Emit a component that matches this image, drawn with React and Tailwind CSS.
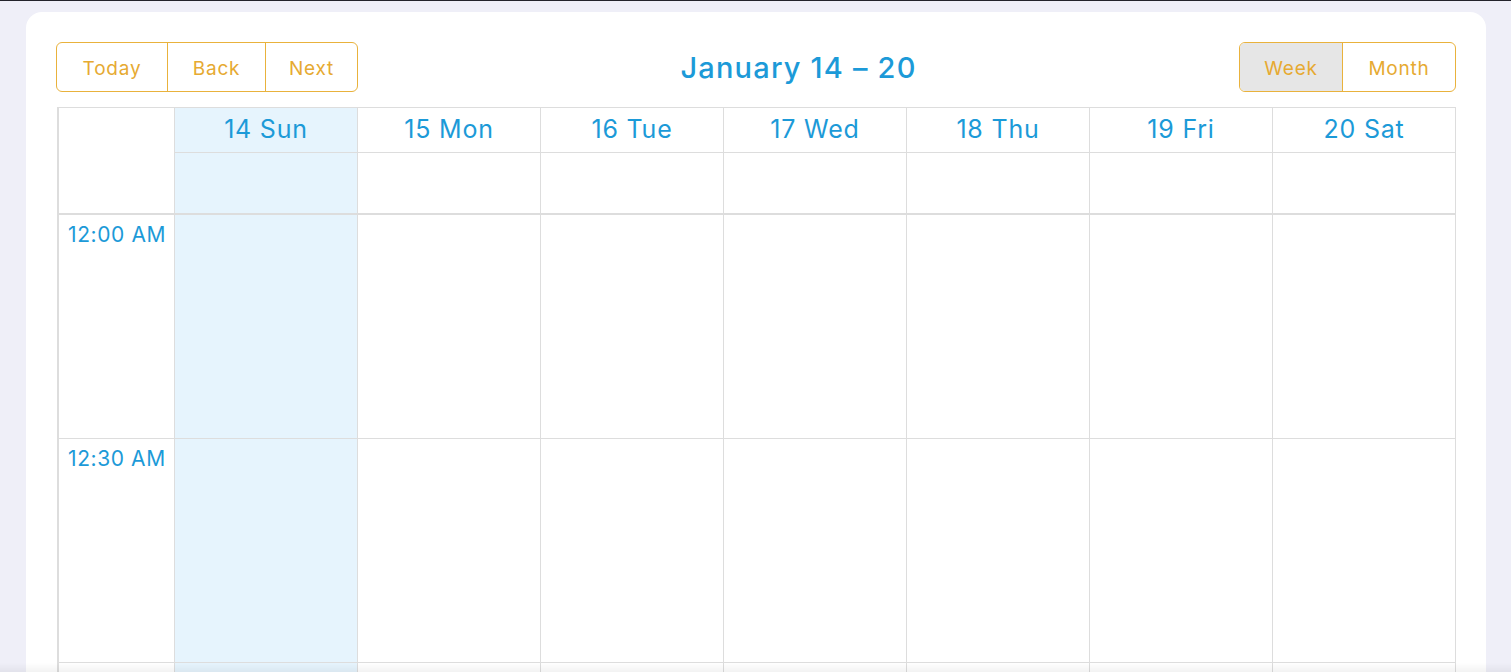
import React from "react";

const days = ["14 Sun", "15 Mon", "16 Tue", "17 Wed", "18 Thu", "19 Fri", "20 Sat"];
const times = ["12:00 AM", "12:30 AM", ""];

export default function App() {
  return (
    <div
      className="min-h-screen bg-[#efeff8] border-t border-[#23232b] px-[26px] pt-[11px] overflow-hidden"
      style={{ fontFamily: "Inter, 'Noto Sans', sans-serif" }}
    >
      <div className="bg-white rounded-2xl pl-[30px] pr-[30px] pt-[30px] pb-10 w-[1460px]">
        {/* toolbar */}
        <div className="flex items-center justify-between h-[50px]">
          <div className="flex h-[50px] border border-[#e9b23c] rounded-md text-[19px] tracking-[0.8px] text-[#e6aa32]">
            <button className="w-[111px] border-r border-[#e9b23c] pt-[4px]">Today</button>
            <button className="w-[98px] border-r border-[#e9b23c] pt-[4px]">Back</button>
            <button className="w-[91px] pt-[4px]">Next</button>
          </div>
          <div className="text-[29px] font-medium text-[#1c9ad8] tracking-[1.2px] pt-[2px]">January 14 – 20</div>
          <div className="flex h-[50px] border border-[#e9b23c] rounded-md text-[19px] tracking-[0.8px] text-[#e6aa32] overflow-hidden">
            <button className="w-[103px] border-r border-[#e9b23c] bg-[#e6e6e6] pt-[4px]">Week</button>
            <button className="w-[112px] pt-[4px]">Month</button>
          </div>
        </div>

        {/* grid */}
        <div className="mt-[15px] ml-px border border-[#dddddd] border-l-2 text-[#1c9ad8]">
          {/* header */}
          <div className="grid grid-cols-[115px_repeat(7,1fr)] border-b-2 border-[#dddddd]">
            <div />
            {days.map((d, i) => (
              <div key={d} className={`border-l border-[#dddddd] ${i === 0 ? "bg-[#e6f4fd]" : ""}`}>
                <div className="h-[45px] flex items-center justify-center text-[25px] tracking-[0.8px] border-b border-[#dddddd]">{d}</div>
                <div className="h-[60px]" />
              </div>
            ))}
          </div>
          {/* body */}
          <div className="grid grid-cols-[115px_repeat(7,1fr)]">
            <div>
              {times.map((t, i) => (
                <div key={i} className="h-[224px] border-b border-[#dddddd] pl-[9px] pt-[7px] text-[21px] tracking-[0.6px] leading-[26px]">
                  {t}
                </div>
              ))}
            </div>
            {days.map((d, i) => (
              <div key={d} className={`border-l border-[#dddddd] ${i === 0 ? "bg-[#e6f4fd]" : ""}`}>
                {times.map((t, j) => (
                  <div key={j} className="h-[224px] border-b border-[#dddddd]" />
                ))}
              </div>
            ))}
          </div>
        </div>
      </div>
      <div className="fixed left-0 right-0 bottom-0 h-[9px] bg-gradient-to-b from-transparent to-black/5 pointer-events-none" />
    </div>
  );
}
